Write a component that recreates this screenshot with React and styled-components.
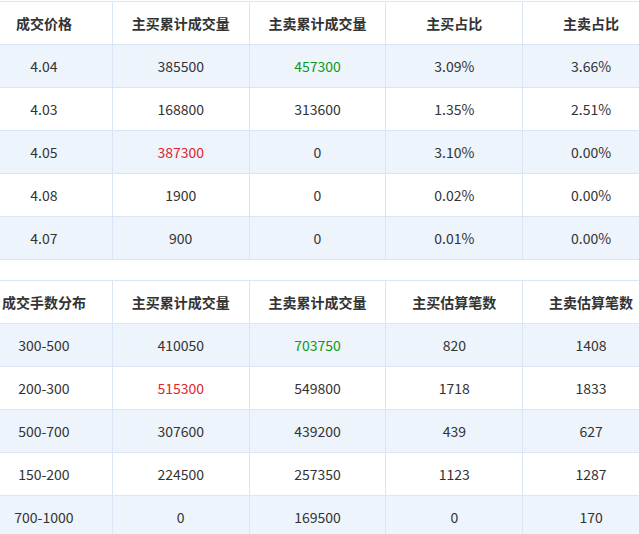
import React from "react";
import styled, { createGlobalStyle } from "styled-components";

const G = createGlobalStyle`
  html,body{margin:0;padding:0;background:#fff;overflow:hidden;}
  body{font-family:"Noto Sans CJK SC","Noto Sans",sans-serif;font-size:14px;color:#333;}
`;
const Wrap = styled.div`padding-top:1px;margin-left:-25px;display:flex;flex-direction:column;gap:20px;`;
const Table = styled.table`border-collapse:collapse;width:685px;table-layout:fixed;`;
const Th = styled.th`height:42px;border:1px solid #dae5f6;font-weight:bold;color:#333;text-align:center;padding:0;`;
const Td = styled.td`height:42px;border:1px solid #dae5f6;text-align:center;padding:0;
  color:${p => p.$c === "g" ? "#0a9a1a" : p.$c === "r" ? "#e0252f" : "#333"};`;
const Tr = styled.tr`background:${p => p.$alt ? "#edf4fc" : "#fff"};`;

const t1 = [
  ["4.04", "385500", "457300:g", "3.09%", "3.66%"],
  ["4.03", "168800", "313600", "1.35%", "2.51%"],
  ["4.05", "387300:r", "0", "3.10%", "0.00%"],
  ["4.08", "1900", "0", "0.02%", "0.00%"],
  ["4.07", "900", "0", "0.01%", "0.00%"],
];
const t2 = [
  ["300-500", "410050", "703750:g", "820", "1408"],
  ["200-300", "515300:r", "549800", "1718", "1833"],
  ["500-700", "307600", "439200", "439", "627"],
  ["150-200", "224500", "257350", "1123", "1287"],
  ["700-1000", "0", "169500", "0", "170"],
];

const T = ({ head, rows }) => (
  <Table>
    <thead><Tr>{head.map(h => <Th key={h}>{h}</Th>)}</Tr></thead>
    <tbody>
      {rows.map((r, i) => (
        <Tr key={i} $alt={i % 2 === 0}>
          {r.map((c, j) => { const [v, col] = c.split(":"); return <Td key={j} $c={col}>{v}</Td>; })}
        </Tr>
      ))}
    </tbody>
  </Table>
);

export default function App() {
  return (
    <Wrap>
      <G />
      <T head={["成交价格", "主买累计成交量", "主卖累计成交量", "主买占比", "主卖占比"]} rows={t1} />
      <T head={["成交手数分布", "主买累计成交量", "主卖累计成交量", "主买估算笔数", "主卖估算笔数"]} rows={t2} />
    </Wrap>
  );
}
